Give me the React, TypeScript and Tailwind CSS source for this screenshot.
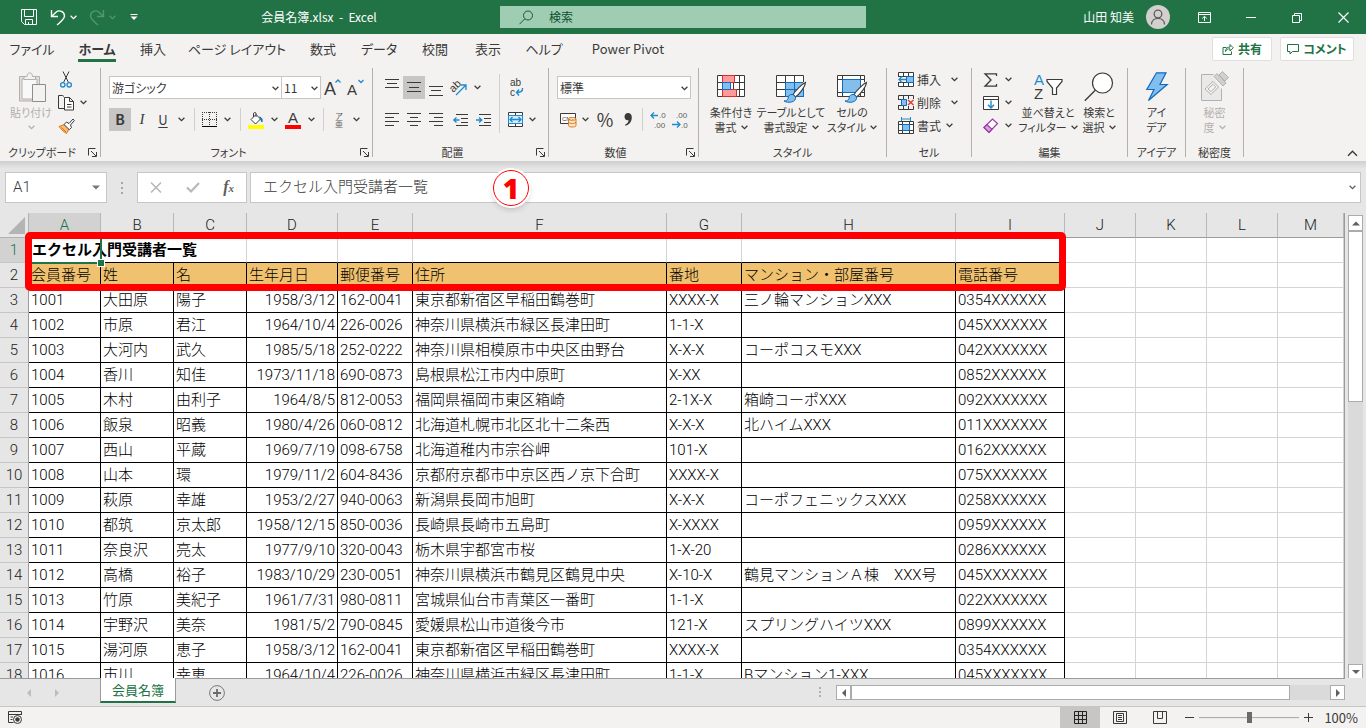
import type { ReactNode } from "react";
import clsx from "clsx";

// --- Data ---

const TABS = [
  { label: "ファイル", width: "w-[64px]" },
  { label: "ホーム", width: "w-[66px]", active: true },
  { label: "挿入", width: "w-[46px]" },
  { label: "ページ レイアウト", width: "w-[122px]" },
  { label: "数式", width: "w-[50px]" },
  { label: "データ", width: "w-[62px]" },
  { label: "校閲", width: "w-[50px]" },
  { label: "表示", width: "w-[56px]" },
  { label: "ヘルプ", width: "w-[56px]" },
  { label: "Power Pivot", width: "w-[112px]" },
];

const COLUMNS = [
  { name: "A", width: "w-[72px]" },
  { name: "B", width: "w-[73px]" },
  { name: "C", width: "w-[73px]" },
  { name: "D", width: "w-[91px]" },
  { name: "E", width: "w-[75px]" },
  { name: "F", width: "w-[254px]" },
  { name: "G", width: "w-[75px]" },
  { name: "H", width: "w-[214px]" },
  { name: "I", width: "w-[109px]" },
  { name: "J", width: "w-[71px]" },
  { name: "K", width: "w-[71px]" },
  { name: "L", width: "w-[71px]" },
  { name: "M", width: "" },
];

const HEADINGS = ["会員番号", "姓", "名", "生年月日", "郵便番号", "住所", "番地", "マンション・部屋番号", "電話番号"];

const MEMBERS = [
  ["1001", "大田原", "陽子", "1958/3/12", "162-0041", "東京都新宿区早稲田鶴巻町", "XXXX-X", "三ノ輪マンションXXX", "0354XXXXXX"],
  ["1002", "市原", "君江", "1964/10/4", "226-0026", "神奈川県横浜市緑区長津田町", "1-1-X", "", "045XXXXXXX"],
  ["1003", "大河内", "武久", "1985/5/18", "252-0222", "神奈川県相模原市中央区由野台", "X-X-X", "コーポコスモXXX", "042XXXXXXX"],
  ["1004", "香川", "知佳", "1973/11/18", "690-0873", "島根県松江市内中原町", "X-XX", "", "0852XXXXXX"],
  ["1005", "木村", "由利子", "1964/8/5", "812-0053", "福岡県福岡市東区箱崎", "2-1X-X", "箱崎コーポXXX", "092XXXXXXX"],
  ["1006", "飯泉", "昭義", "1980/4/26", "060-0812", "北海道札幌市北区北十二条西", "X-X-X", "北ハイムXXX", "011XXXXXXX"],
  ["1007", "西山", "平蔵", "1969/7/19", "098-6758", "北海道稚内市宗谷岬", "101-X", "", "0162XXXXXX"],
  ["1008", "山本", "環", "1979/11/2", "604-8436", "京都府京都市中京区西ノ京下合町", "XXXX-X", "", "075XXXXXXX"],
  ["1009", "萩原", "幸雄", "1953/2/27", "940-0063", "新潟県長岡市旭町", "X-X-X", "コーポフェニックスXXX", "0258XXXXXX"],
  ["1010", "都筑", "京太郎", "1958/12/15", "850-0036", "長崎県長崎市五島町", "X-XXXX", "", "0959XXXXXX"],
  ["1011", "奈良沢", "亮太", "1977/9/10", "320-0043", "栃木県宇都宮市桜", "1-X-20", "", "0286XXXXXX"],
  ["1012", "高橋", "裕子", "1983/10/29", "230-0051", "神奈川県横浜市鶴見区鶴見中央", "X-10-X", "鶴見マンションＡ棟　XXX号", "045XXXXXXX"],
  ["1013", "竹原", "美紀子", "1961/7/31", "980-0811", "宮城県仙台市青葉区一番町", "1-1-X", "", "022XXXXXXX"],
  ["1014", "宇野沢", "美奈", "1981/5/2", "790-0845", "愛媛県松山市道後今市", "121-X", "スプリングハイツXXX", "0899XXXXXX"],
  ["1015", "湯河原", "恵子", "1958/3/12", "162-0041", "東京都新宿区早稲田鶴巻町", "XXXX-X", "", "0354XXXXXX"],
  ["1016", "市川", "幸恵", "1964/10/4", "226-0026", "神奈川県横浜市緑区長津田町", "1-1-X", "Bマンション1-XXX", "045XXXXXXX"],
];

// --- App ---

export default function App() {
  return (
    <div className="flex h-screen flex-col overflow-hidden bg-[#f3f2f1] font-['Noto_Sans_CJK_JP','Liberation_Sans',sans-serif] text-[12px] text-[#3b3a39] [&_button]:whitespace-nowrap">
      <TitleBar />
      <RibbonTabs />
      <Ribbon />
      <FormulaBar />
      <Sheet />
      <SheetTabs />
      <StatusBar />
    </div>
  );
}

// --- Small building blocks ---

function Svg({ w, h, children, className }: { w: number; h: number; children: ReactNode; className?: string }) {
  return (
    <svg width={w} height={h} viewBox={`0 0 ${w} ${h}`} fill="none" stroke="#3b3a39" className={clsx("shrink-0 overflow-visible", className)} aria-hidden="true">
      {children}
    </svg>
  );
}

/** Real letters used inside an icon drawing. */
function Letters({ x, y, size, color = "#3b3a39", rotate, children }: { x: number; y: number; size: number; color?: string; rotate?: string; children: string }) {
  return (
    <text x={x} y={y} fontSize={size} fill={color} stroke="none" transform={rotate} fontFamily="'Liberation Sans', sans-serif">
      {children}
    </text>
  );
}

function Chevron({ className }: { className?: string }) {
  return (
    <svg width="7" height="5" viewBox="0 0 7 5" fill="none" stroke="currentColor" strokeWidth="1.3" className={clsx("shrink-0", className)} aria-hidden="true">
      <path d="M.6.8 3.5 3.6 6.4.8" />
    </svg>
  );
}

function Tool({ label, width = "w-[22px]", on, children }: { label: string; width?: string; on?: boolean; children: ReactNode }) {
  return (
    <button aria-label={label} className={clsx("flex h-[23px] shrink-0 items-center justify-center", width, on ? "bg-[#c8c6c4]" : "hover:bg-[#e1dfdd]")}>
      {children}
    </button>
  );
}

function Drop({ label, width = "w-[12px]" }: { label: string; width?: string }) {
  return (
    <Tool label={`${label} オプション`} width={width}>
      <Chevron />
    </Tool>
  );
}

function Divider({ width = "w-[10px]" }: { width?: string }) {
  return (
    <div className={clsx("flex h-[23px] justify-center", width)}>
      <div className="w-px bg-[#d2d0ce]" />
    </div>
  );
}

function Combo({ label, value, width }: { label: string; value: string; width: string }) {
  return (
    <div className={clsx("relative h-[23px] shrink-0", width)}>
      <select aria-label={label} className="h-full w-full appearance-none border border-[#c8c6c4] bg-white pl-[2px] text-[12px] leading-5">
        <option>{value}</option>
      </select>
      <Chevron className="pointer-events-none absolute top-[10px] right-[3px]" />
    </div>
  );
}

function Group({ label, width, launcher, children }: { label: string; width: string; launcher?: boolean; children: ReactNode }) {
  return (
    <section className={clsx("flex h-[89px] shrink-0 flex-col border-r border-[#b3b0ad]", width)}>
      <div className="flex flex-1">{children}</div>
      <div className="flex h-[10px] items-center">
        <span className="flex-1 text-center text-[11px] leading-3 whitespace-nowrap">{label}</span>
        {launcher && (
          <button aria-label={`${label}の設定`} className="w-[16px] pl-[4px]">
            <Svg w={9} h={9}>
              <path d="M.5 7.500V.5H7.500M3 3l5 5M8.500 4V8.500H4" />
            </Svg>
          </button>
        )}
      </div>
    </section>
  );
}

function BigButton({ icon, lines, width, drop, muted }: { icon: ReactNode; lines: string[]; width: string; drop?: boolean; muted?: boolean }) {
  return (
    <button className={clsx("flex shrink-0 flex-col items-center pt-[4px] text-[11px] leading-[15px]", width, muted && "text-[#b3b0ad]")}>
      <span className="flex h-[33px] items-start">{icon}</span>
      <span>{lines[0]}</span>
      <span className="flex h-[15px] items-center gap-[4px]">
        {lines[1]}
        {drop && <Chevron />}
      </span>
    </button>
  );
}

// --- Title bar ---

function TitleBar() {
  return (
    <header className="flex h-[34px] shrink-0 items-center bg-[#217346] text-white">
      <div className="flex w-[500px] shrink-0 items-center">
        <button aria-label="上書き保存" className="ml-[21px]">
          <Svg w={16} h={16}>
            <path stroke="white" d="M.5.5H15.500V15.500H3.500L.5 12.500ZM3.500.5V7.500H12.500V.5M4.500 15.500V10.500H11.500V15.500M7.500 13V15.500" />
          </Svg>
        </button>
        <button aria-label="元に戻す" className="ml-[13px] flex items-center gap-[4px]">
          <Svg w={16} h={17}>
            <path stroke="white" strokeWidth="1.400" d="M1.500 1V7.500H8M1.500 7.500 6 3.200C9 .6 14.500 2.200 14.500 7 14.500 10 11.500 12 7 16" />
          </Svg>
          <Chevron />
        </button>
        <button aria-label="やり直し" className="ml-[12px] flex items-center gap-[4px] text-[#55956f]">
          <Svg w={16} h={17}>
            <path stroke="#55956f" strokeWidth="1.400" d="M14.500 1V7.500H8M14.500 7.500 10 3.200C7 .6 1.500 2.200 1.500 7 1.500 10 4.500 12 9 16" />
          </Svg>
          <Chevron />
        </button>
        <button aria-label="クイック アクセス ツール バーのユーザー設定" className="ml-[14px]">
          <Svg w={8} h={8}>
            <path stroke="white" d="M.5 1.500H7.500" />
            <path stroke="none" fill="white" d="M.5 3.500H7.500L4 7Z" />
          </Svg>
        </button>
        <h1 className="flex-1 text-center text-[12px] whitespace-pre">会員名簿.xlsx  -  Excel</h1>
      </div>
      <label className="flex h-[22px] min-w-0 flex-1 items-center bg-[#9fcdb3]">
        <Svg w={15} h={15} className="ml-[19px]">
          <circle cx="9" cy="5.500" r="4.500" stroke="#185c37" />
          <path stroke="#185c37" d="M5.800 8.800.5 14.200" />
        </Svg>
        <input type="search" placeholder="検索" aria-label="検索" className="ml-[15px] min-w-0 flex-1 bg-transparent text-[12px] outline-none placeholder:text-[#0f5130]" />
      </label>
      <div className="flex w-[500px] shrink-0 items-center justify-end pr-[17px]">
        <span className="mr-[12px] text-[12px]">山田 知美</span>
        <Svg w={24} h={24} className="mr-[28px]">
          <circle cx="12" cy="12" r="12" fill="#d2d0ce" stroke="none" />
          <circle cx="12" cy="9" r="3.800" stroke="#605e5c" strokeWidth="1.300" />
          <path stroke="#605e5c" strokeWidth="1.300" d="M5.500 19.500C5.500 15.500 8.500 13.300 12 13.300s6.500 2.200 6.500 6.200" />
        </Svg>
        <button aria-label="リボンの表示オプション" className="mr-[35px]">
          <Svg w={13} h={11}>
            <path stroke="white" d="M.5.5H12.500V10.500H.5ZM.5 2.500H12.500M6.500 9V4.500M4.200 6.500 6.500 4.300 8.800 6.500" />
          </Svg>
        </button>
        <button aria-label="最小化" className="mr-[36px]">
          <Svg w={10} h={11}>
            <path stroke="white" d="M0 5.500H10" />
          </Svg>
        </button>
        <button aria-label="元に戻す（縮小）" className="mr-[36px]">
          <Svg w={10} h={11}>
            <path stroke="white" d="M.5 3.500H7.500V10.500H.5ZM2.500 3.500V1.500H9.500V8.500H7.500" />
          </Svg>
        </button>
        <button aria-label="閉じる">
          <Svg w={11} h={11}>
            <path stroke="white" strokeWidth="1.200" d="M.5.5 10.500 10.500M10.500.5.5 10.500" />
          </Svg>
        </button>
      </div>
    </header>
  );
}

// --- Ribbon ---

function RibbonTabs() {
  return (
    <nav className="flex h-[34px] shrink-0 items-start text-[13px] [font-feature-settings:'palt']">
      {TABS.map((tab) => (
        <a key={tab.label} href="#" className={clsx("flex shrink-0 justify-center pt-[5px] whitespace-nowrap", tab.width)}>
          <span className={clsx("h-[23px] leading-5", tab.active && "border-b-3 border-[#217346] font-bold")}>{tab.label}</span>
        </a>
      ))}
      <div className="flex flex-1 justify-end gap-2 pt-[3px] pr-3 font-bold text-[#217346]">
        <button className="flex h-6 w-[60px] items-center justify-center gap-[4px] rounded-xs border border-[#e1dfdd] bg-white text-[12px]">
          <Svg w={12} h={12}>
            <path stroke="#217346" d="M4.500 4.500H1V11.500H9.500V8.500M3.500 8.500C3.500 5.500 5.500 4 8 4V1.500L11.300 4.800 8 8V5.800C6 5.800 4.500 6.500 3.500 8.500Z" />
          </Svg>
          共有
        </button>
        <button className="flex h-6 w-[74px] items-center justify-center gap-[4px] rounded-xs border border-[#e1dfdd] bg-white text-[12px]">
          <Svg w={12} h={11}>
            <path stroke="#217346" d="M.5.5H11.500V7.500H5.500L3 10V7.500H.5Z" />
          </Svg>
          コメント
        </button>
      </div>
    </nav>
  );
}

function Ribbon() {
  return (
    <div className="flex h-[93px] shrink-0 [font-feature-settings:'palt']">
      <Group label="クリップボード" width="w-[101px]" launcher>
        <BigButton
          width="ml-[8px] w-[46px]"
          lines={["貼り付け", ""]}
          drop
          muted
          icon={
            <Svg w={28} h={31} className="ml-[4px]">
              <path stroke="#b3b0ad" fill="#e1dfdd" d="M.5 4.500H20.500V29H.5Z" />
              <path stroke="#b3b0ad" fill="#f8f8f8" d="M3 7H18V27H3Z" />
              <path stroke="#b3b0ad" fill="#f3f2f1" d="M5 7.500V4.500H8C8-.3 13.500-.3 13.500 4.500H16.500V7.500Z" />
              <path stroke="#8f8d8b" fill="#f3f2f1" d="M13.500 12.500H26.500V29.500H13.500Z" />
            </Svg>
          }
        />
        <div className="ml-px flex flex-col">
          <Tool label="切り取り">
            <Svg w={12} h={17}>
              <path d="M3 .5 8.500 11.500M9 .5 3.500 11.500" />
              <circle cx="2.800" cy="13.800" r="2.200" stroke="#1e8bcd" strokeWidth="1.300" />
              <circle cx="9.200" cy="13.800" r="2.200" stroke="#1e8bcd" strokeWidth="1.300" />
            </Svg>
          </Tool>
          <div className="flex">
            <Tool label="コピー">
              <Svg w={17} h={17}>
                <path d="M6.500 14.500H.5V1.500H4.500L6 2.500" />
                <path fill="white" d="M6.500 3.500H11.500L15.500 7.500V16H6.500ZM11.500 3.500V7.500H15.500M9 10.500H13.500M9 13H13.500" />
              </Svg>
            </Tool>
            <Drop label="コピー" />
          </div>
          <Tool label="書式のコピー/貼り付け">
            <Svg w={17} h={16}>
              <path fill="#f9bd72" stroke="#d87a16" d="M1 8.500 6.500 6.500 11 11 8.500 15.500 5 13Z" />
              <path stroke="#d87a16" d="M3.500 9.500 8 14" />
              <path fill="white" d="M6 6.500 8.500 4 11 5.500 15 1 16.300 2.500 12.500 7 13.500 9.500 11.300 11.700Z" />
            </Svg>
          </Tool>
        </div>
      </Group>

      <FontGroup />
      <AlignGroup />
      <NumberGroup />

      <Group label="スタイル" width="w-[188px]">
        <BigButton
          width="ml-[3px] w-[58px]"
          lines={["条件付き", "書式"]}
          drop
          icon={
            <Svg w={28} h={26} className="mt-[3px]">
              <path fill="white" d="M.5.5H27.500V21.500H.5ZM5.500.5V21.500M16.500.5V21.500M22.500.5V21.500M.5 7.500H27.500M.5 14.500H27.500" />
              <path fill="#ff9a9a" stroke="#d92c2c" d="M5.500.5H17.500V7.500H5.500ZM5.500 14.500H19.500V21.500H5.500Z" />
              <path fill="#83beec" stroke="#0f6cbd" d="M5.500 7.500H13.500V14.500H5.500Z" />
            </Svg>
          }
        />
        <BigButton
          width="w-[62px]"
          lines={["テーブルとして", "書式設定"]}
          drop
          icon={
            <Svg w={31} h={30} className="mt-[3px]">
              <path fill="white" d="M.5.5H27.500V21.500H.5ZM.5 7.500H27.500M9.500.5V21.500M18.500.5V21.500M.5 14.500H27.500" />
              <path fill="#83beec" stroke="#0f6cbd" d="M9.500 7.500H27.500V21.500H9.500ZM18.500 7.500V21.500M9.500 14.500H27.500" />
              <Brush />
            </Svg>
          }
        />
        <BigButton
          width="w-[60px]"
          lines={["セルの", "スタイル"]}
          drop
          icon={
            <Svg w={31} h={30} className="mt-[3px]">
              <path fill="white" d="M.5.5H27.500V21.500H.5ZM5.500.5V21.500M23.500.5V21.500M.5 4.500H27.500M.5 17.500H27.500" />
              <path fill="#83beec" stroke="#0f6cbd" d="M5.500 4.500H23.500V17.500H5.500Z" />
              <Brush />
            </Svg>
          }
        />
      </Group>

      <Group label="セル" width="w-[85px]">
        <div className="ml-[11px] flex flex-col">
          <CellButton
            label="挿入"
            wide
            icon={
              <Svg w={16} h={15}>
                <path fill="white" d="M.5.5H15.500V14.500H.5ZM5.500.5V14.500M10.500.5V14.500M.5 4.500H15.500M.5 10.500H15.500" />
                <path fill="#83beec" stroke="#0f6cbd" d="M8.500 4.500H15.500V10.500H8.500Z" />
                <path stroke="#f3f2f1" strokeWidth="5" d="M0 7.500H8" />
                <path stroke="#1e8bcd" strokeWidth="1.300" d="M8 7.500H1M4 4.500 1 7.500 4 10.500" />
              </Svg>
            }
          />
          <CellButton
            label="削除"
            wide
            icon={
              <Svg w={16} h={15}>
                <path d="M.5 5V.5H15.500V4M5.500.5V4M10.500.5V4M.5 10V14.500H15.500V11M5.500 14.500V11M10.500 14.500V11M.5 4.500H4M.5 10.500H4" />
                <path fill="#83beec" stroke="#0f6cbd" d="M3.500 4.500H8.500V10.500H3.500Z" />
                <path stroke="#e03c31" strokeWidth="1.500" d="M10 5 15.500 10M15.500 5 10 10" />
              </Svg>
            }
          />
          <CellButton
            label="書式"
            icon={
              <Svg w={16} h={17}>
                <path fill="white" d="M.5 4.500H15.500V16.500H.5ZM4.500 4.500V16.500M11.500 4.500V16.500M.5 7.500H15.500M.5 13.500H15.500" />
                <path fill="#83beec" stroke="#0f6cbd" d="M4.500 7.500H11.500V13.500H4.500Z" />
                <path stroke="#1e8bcd" d="M3.500 0V4M12.500 0V4M3.500 2H12.500" />
              </Svg>
            }
          />
        </div>
      </Group>

      <Group label="編集" width="w-[156px]">
        <div className="ml-[8px] flex flex-col">
          <div className="flex">
            <Tool label="オート SUM">
              <Svg w={14} h={14}>
                <path strokeWidth="1.300" d="M12.500 3V.8H1L7 7 1 13.200H12.500V11" />
              </Svg>
            </Tool>
            <Drop label="オート SUM" />
          </div>
          <div className="flex">
            <Tool label="フィル">
              <Svg w={16} h={14}>
                <path fill="white" d="M.5.5H15.500V13.500H.5ZM.5 3.500H15.500" />
                <path stroke="#1e8bcd" strokeWidth="1.400" d="M8 4.500V12M5 8.800 8 12 11 8.800" />
              </Svg>
            </Tool>
            <Drop label="フィル" />
          </div>
          <div className="flex">
            <Tool label="クリア">
              <Svg w={16} h={16}>
                <path fill="white" stroke="#9b3aa5" strokeWidth="1.200" d="M1 9.500 9.500 1 14.500 5.500 6 14.500Z" />
                <path fill="#d9a0dd" stroke="#9b3aa5" strokeWidth="1.200" d="M1 9.500 4 6.500 9 11.200 6 14.500Z" />
              </Svg>
            </Tool>
            <Drop label="クリア" />
          </div>
        </div>
        <BigButton
          width="ml-[4px] w-[60px]"
          lines={["並べ替えと", "フィルター"]}
          drop
          icon={
            <Svg w={29} h={28}>
              <Letters x={0} y={13} size={15} color="#1e8bcd">A</Letters>
              <Letters x={0} y={27} size={15}>Z</Letters>
              <path fill="white" strokeWidth="1.200" d="M13 7.500H28V9.500L22.500 16V22.500H18.500V16L13 9.500Z" />
            </Svg>
          }
        />
        <BigButton
          width="w-[42px]"
          lines={["検索と", "選択"]}
          drop
          icon={
            <Svg w={30} h={30}>
              <circle cx="18.500" cy="11" r="10" fill="white" strokeWidth="1.200" />
              <path strokeWidth="1.300" d="M11.500 18 .8 28.800" />
            </Svg>
          }
        />
      </Group>

      <Group label="アイデア" width="w-[58px]">
        <BigButton
          width="w-full"
          lines={["アイ", "デア"]}
          icon={
            <Svg w={22} h={30}>
              <path fill="#83beec" stroke="#0f6cbd" strokeWidth="1.200" d="M10.500.8H20L14 12.500H21.200L2.500 28.500 8 17.500H.8Z" />
            </Svg>
          }
        />
      </Group>

      <Group label="秘密度" width="w-[58px]">
        <BigButton
          width="w-full"
          lines={["秘密", "度"]}
          drop
          muted
          icon={
            <Svg w={28} h={30}>
              <path stroke="#b3b0ad" fill="#e9e9e9" d="M.5 2.500H20.500V28.500H.5Z" />
              <path stroke="none" fill="#f3f2f1" d="M11 4 17-2 30 8 20 17Z" />
              <path stroke="#b3b0ad" fill="#f3f2f1" d="M4 17 12 9.500 17.500 15 10 22.500ZM7 17 12 12.300 14.700 15 10 19.700Z" />
              <path stroke="#b3b0ad" fill="#d2d0ce" d="M13 4.500 16 1.500 25 11 22 14ZM18 3 21.500-.5 27.500 5.500 24 9Z" />
            </Svg>
          }
        />
      </Group>

      <div className="flex flex-1 items-end justify-end pr-[8px] pb-[4px]">
        <button aria-label="リボンを折りたたむ">
          <Svg w={11} h={7}>
            <path strokeWidth="1.400" d="M1 5.800 5.500 1.300 10 5.800" />
          </Svg>
        </button>
      </div>
    </div>
  );
}

/** Paint brush that sits over the table drawings of the style buttons. */
function Brush() {
  return (
    <g>
      <path stroke="#f3f2f1" strokeWidth="3.500" d="M29 8 20 20 9 26" />
      <path fill="white" strokeWidth="1.100" d="M29.500 7.500C26 9 19.500 15.500 17 19.500L19.500 22C23.500 19 29 12 29.500 7.500Z" />
      <path fill="#83beec" stroke="#0f6cbd" d="M17 19.500C13.500 19 12 21 12 23.500 11.500 25.300 10 25.800 8 26 12 28.500 20.500 27.500 19.500 22Z" />
    </g>
  );
}

function CellButton({ label, icon, wide }: { label: string; icon: ReactNode; wide?: boolean }) {
  return (
    <button className={clsx("flex h-[23px] items-center", wide ? "w-[60px] justify-between" : "gap-[5px]")}>
      <span className="flex items-center gap-[3px] leading-4">
        {icon}
        {label}
      </span>
      <Chevron />
    </button>
  );
}

function FontGroup() {
  return (
    <Group label="フォント" width="w-[272px]" launcher>
      <div className="ml-[8px] flex flex-col gap-[9px] pt-[8px]">
        <div className="flex">
          <Combo label="フォント" value="游ゴシック" width="w-[173px]" />
          <Combo label="フォント サイズ" value="11" width="-ml-px w-[40px]" />
          <Tool label="フォント サイズの拡大" width="w-[23px]">
            <Svg w={17} h={17}>
              <Letters x={0} y={16} size={18}>A</Letters>
              <path stroke="#1e8bcd" strokeWidth="1.300" d="M11.500 3.500 14 1 16.500 3.500" />
            </Svg>
          </Tool>
          <Tool label="フォント サイズの縮小" width="w-[23px]">
            <Svg w={17} h={17}>
              <Letters x={0} y={16} size={15}>A</Letters>
              <path stroke="#1e8bcd" strokeWidth="1.300" d="M11.500 1 14 3.500 16.500 1" />
            </Svg>
          </Tool>
        </div>
        <div className="flex">
          <Tool label="太字" on>
            <span className="text-[14px] font-bold">B</span>
          </Tool>
          <Tool label="斜体">
            <span className="font-['Liberation_Serif',serif] text-[15px] italic">I</span>
          </Tool>
          <Tool label="下線" width="w-[20px]">
            <span className="text-[13px] underline underline-offset-2">U</span>
          </Tool>
          <Drop label="下線" width="w-[16px]" />
          <Divider />
          <Tool label="罫線" width="w-[20px]">
            <Svg w={15} h={15}>
              <path strokeDasharray="1 1" d="M.5 0V13M7.500 0V13M14.500 0V13M0 .5H15M0 7.500H15" />
              <path stroke="#000" d="M0 14.500H15" />
            </Svg>
          </Tool>
          <Drop label="罫線" width="w-[16px]" />
          <Divider />
          <Tool label="塗りつぶしの色">
            <Svg w={16} h={18}>
              <path fill="white" d="M3 8.500 8 3.500 12.500 8 7.500 13Z" />
              <path d="M8 6V2.500C8 1 5.500 1 5.500 3V6" />
              <path fill="#1e6fb5" stroke="#1e6fb5" d="M11.500 6C14 6.500 14.500 8.500 14 11 13 9.500 13 8.500 11.500 6Z" />
              <path stroke="none" fill="#ffff00" d="M0 14H16V18H0Z" />
            </Svg>
          </Tool>
          <Drop label="塗りつぶしの色" width="w-[14px]" />
          <Tool label="フォントの色" width="w-[24px]">
            <Svg w={16} h={18}>
              <Letters x={3} y={12} size={15}>A</Letters>
              <path stroke="none" fill="#ff0000" d="M0 14H16V18H0Z" />
            </Svg>
          </Tool>
          <Drop label="フォントの色" />
          <Divider width="w-[12px]" />
          <Tool label="ふりがなの表示/非表示" width="w-[20px]">
            <span className="flex flex-col text-[8px] leading-[8px] text-[#605e5c]">
              <span>ア</span>
              <span>亜</span>
            </span>
          </Tool>
          <Drop label="ふりがな" width="w-[14px]" />
        </div>
      </div>
    </Group>
  );
}

function Lines({ d }: { d: string }) {
  return (
    <Svg w={14} h={19}>
      <path d={d} />
    </Svg>
  );
}

function AlignGroup() {
  return (
    <Group label="配置" width="w-[176px]" launcher>
      <div className="ml-[8px] flex flex-col gap-[9px] pt-[8px]">
        <div className="flex">
          <Tool label="上揃え"><Lines d="M0 1.500H14M2 5.500H12M0 9.500H14" /></Tool>
          <Tool label="上下中央揃え" on><Lines d="M0 4.500H14M2 9.500H12M0 13.500H14" /></Tool>
          <Tool label="下揃え"><Lines d="M0 8.500H14M2 12.500H12M0 17.500H14" /></Tool>
          <Tool label="方向" width="w-[24px]">
            <Svg w={18} h={18}>
              <path stroke="#1e8bcd" strokeWidth="1.300" d="M6 16 15.500 6.500M11 6H16V11" />
              <Letters x={0} y={12} size={11} rotate="rotate(-45 4 9)">ab</Letters>
            </Svg>
          </Tool>
          <Drop label="方向" />
        </div>
        <div className="flex">
          <Tool label="左揃え"><Lines d="M0 3.500H14M0 7.500H9M0 11.500H14M0 15.500H9" /></Tool>
          <Tool label="中央揃え"><Lines d="M0 3.500H14M3 7.500H11M0 11.500H14M3 15.500H11" /></Tool>
          <Tool label="右揃え"><Lines d="M0 3.500H14M5 7.500H14M0 11.500H14M5 15.500H14" /></Tool>
          <Tool label="インデントを減らす" width="w-[26px]">
            <Svg w={15} h={14}>
              <path d="M3 1.500H15M8 5.500H15M8 9.500H15M3 12.500H15" />
              <path stroke="#1e8bcd" strokeWidth="1.300" d="M6.500 7H.8M3.500 4.500.8 7 3.500 9.500" />
            </Svg>
          </Tool>
          <Tool label="インデントを増やす" width="w-[20px]">
            <Svg w={15} h={14}>
              <path d="M3 1.500H15M8 5.500H15M8 9.500H15M3 12.500H15" />
              <path stroke="#1e8bcd" strokeWidth="1.300" d="M0 7H5.800M3 4.500 5.800 7 3 9.500" />
            </Svg>
          </Tool>
        </div>
      </div>
      <div className="mt-[6px] ml-auto h-[59px] w-px bg-[#d2d0ce]" />
      <div className="mr-[10px] ml-[4px] flex flex-col gap-[9px] pt-[8px]">
        <Tool label="折り返して全体を表示する">
          <Svg w={15} h={19}>
            <Letters x={2} y={8} size={10}>ab</Letters>
            <Letters x={2} y={18} size={10}>c</Letters>
            <path stroke="#1e8bcd" strokeWidth="1.400" d="M14.500 10C15 13.500 12 14.500 8.500 14.500M11 11.500 8.500 14.500 11 17.500" />
          </Svg>
        </Tool>
        <div className="flex">
          <Tool label="セルを結合して中央揃え">
            <Svg w={15} h={15}>
              <path fill="white" d="M.5.5H14.500V14.500H.5ZM7.500.5V14.500" />
              <path fill="#d5ebfa" stroke="#1e8bcd" d="M.5 3.500H14.500V11.500H.5Z" />
              <path stroke="#1e8bcd" strokeWidth="1.300" d="M2 7.500H13M4.500 5 2 7.500 4.500 10M10.500 5 13 7.500 10.500 10" />
            </Svg>
          </Tool>
          <Drop label="セルを結合" />
        </div>
      </div>
    </Group>
  );
}

function NumberGroup() {
  return (
    <Group label="数値" width="w-[150px]" launcher>
      <div className="ml-[8px] flex flex-col gap-[9px] pt-[8px]">
        <Combo label="表示形式" value="標準" width="w-[134px]" />
        <div className="flex">
          <Tool label="通貨表示形式">
            <Svg w={17} h={14}>
              <path fill="white" d="M.5.5H15.500V10.500H.5Z" />
              <Letters x={2} y={8} size={6}>CNY</Letters>
              <path fill="#fce3cc" stroke="#e07a14" d="M8.500 6C8.500 4 16 4 16 6V12.500C16 14.500 8.500 14.500 8.500 12.500ZM8.500 6C8.500 7.700 16 7.700 16 6M8.500 9C8.500 10.700 16 10.700 16 9" />
            </Svg>
          </Tool>
          <Drop label="通貨表示形式" />
          <Tool label="パーセント スタイル" width="w-[28px]">
            <span className="text-[18px]">%</span>
          </Tool>
          <Tool label="桁区切りスタイル" width="w-[18px]">
            <Svg w={8} h={13}>
              <path stroke="none" fill="#3b3a39" d="M4 0C6.500 0 7.800 1.800 7.800 4.200 7.800 8.500 5.500 11.500 1.500 12.800L1 11.800C3.500 10.500 4.500 9 4.600 7.200 2 7.700.5 6 .5 3.800.5 1.500 2 0 4 0Z" />
            </Svg>
          </Tool>
          <Divider />
          <Tool label="小数点以下の表示桁数を増やす">
            <Svg w={16} h={17}>
              <Letters x={9} y={7} size={8} color="#605e5c">.0</Letters>
              <Letters x={4} y={17} size={8} color="#605e5c">.00</Letters>
              <path stroke="#1e8bcd" strokeWidth="1.300" d="M8 4.500H1M4 1.500 1 4.500 4 7.500" />
            </Svg>
          </Tool>
          <Tool label="小数点以下の表示桁数を減らす">
            <Svg w={16} h={17}>
              <Letters x={4} y={7} size={8} color="#605e5c">.00</Letters>
              <Letters x={9} y={17} size={8} color="#605e5c">.0</Letters>
              <path stroke="#1e8bcd" strokeWidth="1.300" d="M0 13.500H8M5 10.500 8 13.500 5 16.500" />
            </Svg>
          </Tool>
        </div>
      </div>
    </Group>
  );
}

// --- Formula bar ---

function FormulaBar() {
  return (
    <div className="relative flex h-[52px] shrink-0 items-start bg-[#e6e6e6] bg-linear-to-b from-[#cfcfcf] to-[#e6e6e6] to-15% pt-[11px] pr-[5px] pl-[5px]">
      <div className="flex h-[31px] w-[102px] items-center border border-[#c6c6c6] bg-white pr-[6px] pl-[7px]">
        <input aria-label="名前ボックス" defaultValue="A1" className="w-0 flex-1 font-['Roboto','Noto_Sans_CJK_JP',sans-serif] text-[15px] font-light outline-none" />
        <button aria-label="名前の一覧">
          <Svg w={8} h={5}>
            <path stroke="none" fill="#777" d="M0 .5H8L4 4.500Z" />
          </Svg>
        </button>
      </div>
      <Svg w={4} h={31} className="mx-[13px]">
        <path stroke="none" fill="#a6a6a6" d="M1 10h2v2h-2zM1 15h2v2h-2zM1 20h2v2h-2z" />
      </Svg>
      <div className="flex h-[31px] w-[110px] items-center justify-between border border-[#c6c6c6] bg-white pr-[12px] pl-[12px]">
        <button aria-label="キャンセル">
          <Svg w={12} h={11}>
            <path stroke="#b8b8b8" strokeWidth="1.600" d="M1 .5 11 10.500M11 .5 1 10.500" />
          </Svg>
        </button>
        <button aria-label="入力">
          <Svg w={14} h={11}>
            <path stroke="#b8b8b8" strokeWidth="2.200" d="M1 5.500 5 9.500 13 1" />
          </Svg>
        </button>
        <button aria-label="関数の挿入" className="font-['Liberation_Serif',serif] text-[16px] leading-4 font-bold text-[#605e5c] italic">
          f<span className="text-[11px]">x</span>
        </button>
      </div>
      <div className="ml-[3px] flex h-[31px] flex-1 items-center border border-[#c6c6c6] bg-white pr-[4px] pl-[12px]">
        <input aria-label="数式バー" defaultValue="エクセル入門受講者一覧" className="min-w-0 flex-1 pb-[2px] text-[15px] font-light outline-none" />
        <button aria-label="数式バーの展開" className="text-[#605e5c]">
          <Chevron />
        </button>
      </div>
      {/* Step marker floating over the formula bar */}
      <div className="absolute top-[7px] left-[491px] flex size-[40px] items-center justify-center rounded-full bg-white shadow-md">
        <div className="flex size-[36px] items-center justify-center rounded-full border border-[#f00] font-['Open_Sans',sans-serif] text-[28px] leading-none font-extrabold text-[#f00]">1</div>
      </div>
    </div>
  );
}

// --- Sheet ---

function Sheet() {
  return (
    <main className="flex min-h-0 flex-1 bg-[#e6e6e6]">
      <div className="relative min-w-0 flex-1 overflow-hidden border-r border-[#9b9b9b]">
        <table className="w-full table-fixed border-separate border-spacing-0 bg-white font-['Roboto','Noto_Sans_CJK_JP',sans-serif] text-[15px] leading-[22px] font-light text-black">
          <colgroup>
            <col className="w-[29px]" />
            {COLUMNS.map((col) => (
              <col key={col.name} className={col.width} />
            ))}
          </colgroup>
          <thead>
            <tr className="h-[25px] bg-[#e6e6e6] text-[#222]">
              <th className="border-r border-b border-[#b1b1b1] p-0" aria-label="すべて選択">
                <Svg w={25} h={24} className="block">
                  <path stroke="none" fill="#b4b4b4" d="M25 4V21H8Z" />
                </Svg>
              </th>
              {COLUMNS.map((col) => (
                <th
                  key={col.name}
                  scope="col"
                  className={clsx(
                    "border-r border-b border-r-[#b8b8b8] border-b-[#9b9b9b] p-0 font-light",
                    col.name === "A" && "bg-[#d2d2d2] text-[#217346]",
                  )}
                >
                  {col.name}
                </th>
              ))}
            </tr>
          </thead>
          <tbody>
            <TitleRow />
            <DataRow number={2} cells={HEADINGS} heading />
            {MEMBERS.map((cells, i) => (
              <DataRow key={cells[0]} number={i + 3} cells={cells} />
            ))}
          </tbody>
        </table>
        {/* Red frame round the title and heading rows */}
        <div className="pointer-events-none absolute top-[19px] left-[25px] h-[59px] w-[1041px] rounded-[5px] border-7 border-[#f00]" />
      </div>
      <VerticalScroll />
    </main>
  );
}

function RowNumber({ value, selected }: { value: number; selected?: boolean }) {
  return (
    <th scope="row" className={clsx("border-r border-b border-r-[#9b9b9b] border-b-[#c6c6c6] p-0 font-light", selected ? "bg-[#d2d2d2] text-[#217346]" : "bg-[#e6e6e6] text-[#222]")}>
      {value}
    </th>
  );
}

function TitleRow() {
  return (
    <tr className="h-[25px]">
      <RowNumber value={1} selected />
      <td className="relative border-b border-black p-0 pl-[3px] font-bold whitespace-nowrap">
        エクセル入門受講者一覧
        <span className="absolute -inset-px right-[-1px] bottom-[-2px] border-2 border-[#217346]" />
        <span className="absolute right-[-3px] bottom-[-4px] size-[6px] bg-[#217346] outline outline-white" />
      </td>
      <td className="border-b border-black" />
      {COLUMNS.slice(2).map((col, i) => (
        <td key={col.name} className={clsx("border-r border-b border-r-[#d4d4d4]", i < 7 ? "border-b-black" : "border-b-[#d4d4d4]")} />
      ))}
    </tr>
  );
}

function DataRow({ number, cells, heading }: { number: number; cells: string[]; heading?: boolean }) {
  return (
    <tr className="h-[25px]">
      <RowNumber value={number} />
      {cells.map((text, i) => (
        <td
          key={i}
          className={clsx(
            "overflow-hidden border-r border-b border-black p-0 px-[2px] whitespace-nowrap",
            heading && "bg-[#f0c26f]",
            i === 3 && !heading && "text-right",
          )}
        >
          {text}
        </td>
      ))}
      {COLUMNS.slice(9).map((col) => (
        <td key={col.name} className="border-r border-b border-[#d4d4d4]" />
      ))}
    </tr>
  );
}

function Arrow({ dir }: { dir: "up" | "down" | "left" | "right" }) {
  const paths = { up: "M0 6.500 4 2.500 8 6.500Z", down: "M0 2 4 6 8 2Z", left: "M6 0 2 4 6 8Z", right: "M2 0 6 4 2 8Z" };
  return (
    <Svg w={8} h={8}>
      <path stroke="none" fill="currentColor" d={paths[dir]} />
    </Svg>
  );
}

function VerticalScroll() {
  return (
    <div className="mt-[2px] mr-[3px] -mb-px ml-[3px] flex w-[15px] shrink-0 flex-col bg-[#dadada] text-[#606060]">
      <button aria-label="上へスクロール" className="flex h-[16px] items-center justify-center border border-[#ababab] bg-white">
        <Arrow dir="up" />
      </button>
      <div className="h-[171px] border border-[#ababab] bg-white" />
      <button aria-label="下へスクロール" className="mt-auto flex h-[15px] items-center justify-center border border-[#ababab] bg-white">
        <Arrow dir="down" />
      </button>
    </div>
  );
}

// --- Bottom bars ---

function SheetTabs() {
  return (
    <div className="flex h-[28px] shrink-0 bg-[#e6e6e6]">
      <div className="flex flex-1 border-t border-[#9b9b9b]">
        <div className="flex w-[100px] items-center pl-[25px] text-[#bdbdbd]">
          <button aria-label="前のシート" className="mr-[20px]">
            <Arrow dir="left" />
          </button>
          <button aria-label="次のシート">
            <Arrow dir="right" />
          </button>
        </div>
        <button className="-mt-px h-[25px] w-[76px] border-r border-b-2 border-l border-x-[#9b9b9b] border-b-[#217346] bg-white text-[13px] leading-5 text-[#217346]">会員名簿</button>
        <button aria-label="新しいシート" className="ml-[33px]">
          <Svg w={16} h={16}>
            <circle cx="8" cy="8" r="7.400" stroke="#7a7a7a" />
            <path stroke="#6a6a6a" strokeWidth="1.800" d="M8 4V12M4 8H12" />
          </Svg>
        </button>
        <div className="flex-1" />
        <Svg w={4} h={27} className="mr-[14px]">
          <path stroke="none" fill="#b0b0b0" d="M1 8h2v2h-2zM1 12h2v2h-2zM1 16h2v2h-2z" />
        </Svg>
        <div className="mt-[6px] flex h-[15px] w-[509px] bg-[#dadada] text-[#606060]">
          <button aria-label="左へスクロール" className="flex w-[15px] items-center justify-center border border-[#ababab] bg-white">
            <Arrow dir="left" />
          </button>
          <div className="w-[439px] border border-[#ababab] bg-white" />
          <button aria-label="右へスクロール" className="ml-auto flex w-[15px] items-center justify-center border border-[#ababab] bg-white">
            <Arrow dir="right" />
          </button>
        </div>
      </div>
      <div className="w-[21px]" />
    </div>
  );
}

function StatusBar() {
  return (
    <footer className="flex h-[22px] shrink-0 items-center border-t border-[#c6c6c6]">
      <button aria-label="マクロの記録" className="ml-[8px]">
        <Svg w={15} h={13}>
          <path d="M5.500 11.500H.5V.5H13.500V4M.5 3.500H13.500M2.500 6H5M2.500 8.500H4.500" />
          <circle cx="9.500" cy="8.500" r="4" />
          <circle cx="9.500" cy="8.500" r="1.800" fill="#3b3a39" />
        </Svg>
      </button>
      <div className="flex-1" />
      <button aria-label="標準" className="flex h-full w-[40px] items-center justify-center bg-[#c8c6c4]">
        <Svg w={13} h={13}>
          <path stroke="#222" d="M.5.5H12.500V12.500H.5ZM4.500.5V12.500M8.500.5V12.500M.5 4.500H12.500M.5 8.500H12.500" />
        </Svg>
      </button>
      <button aria-label="ページ レイアウト" className="flex h-full w-[40px] items-center justify-center">
        <Svg w={14} h={13}>
          <path d="M.5.5H13.500V12.500H.5ZM3.500 2.500H10.500V10.500H3.500ZM5 4.500H9M5 6.500H9M5 8.500H9" />
        </Svg>
      </button>
      <button aria-label="改ページ プレビュー" className="flex h-full w-[40px] items-center justify-center">
        <Svg w={14} h={13}>
          <path d="M.5.5H13.500V12.500H.5ZM4.500.5V7.500H9.500V.5" />
        </Svg>
      </button>
      <button aria-label="縮小" className="ml-[5px]">
        <Svg w={9} h={9}>
          <path d="M0 4.500H9" />
        </Svg>
      </button>
      <input
        type="range"
        aria-label="ズーム"
        min={0}
        max={100}
        defaultValue={50}
        className="mx-[5px] h-[12px] w-[100px] appearance-none bg-linear-to-b from-transparent from-45% via-[#a6a6a6] via-45% to-transparent to-55% [&::-webkit-slider-thumb]:h-[11px] [&::-webkit-slider-thumb]:w-[5px] [&::-webkit-slider-thumb]:appearance-none [&::-webkit-slider-thumb]:bg-[#6b6b6b]"
      />
      <button aria-label="拡大">
        <Svg w={9} h={9}>
          <path d="M0 4.500H9M4.500 0V9" />
        </Svg>
      </button>
      <button className="mr-[8px] ml-[11px] text-[13px]">100%</button>
    </footer>
  );
}
